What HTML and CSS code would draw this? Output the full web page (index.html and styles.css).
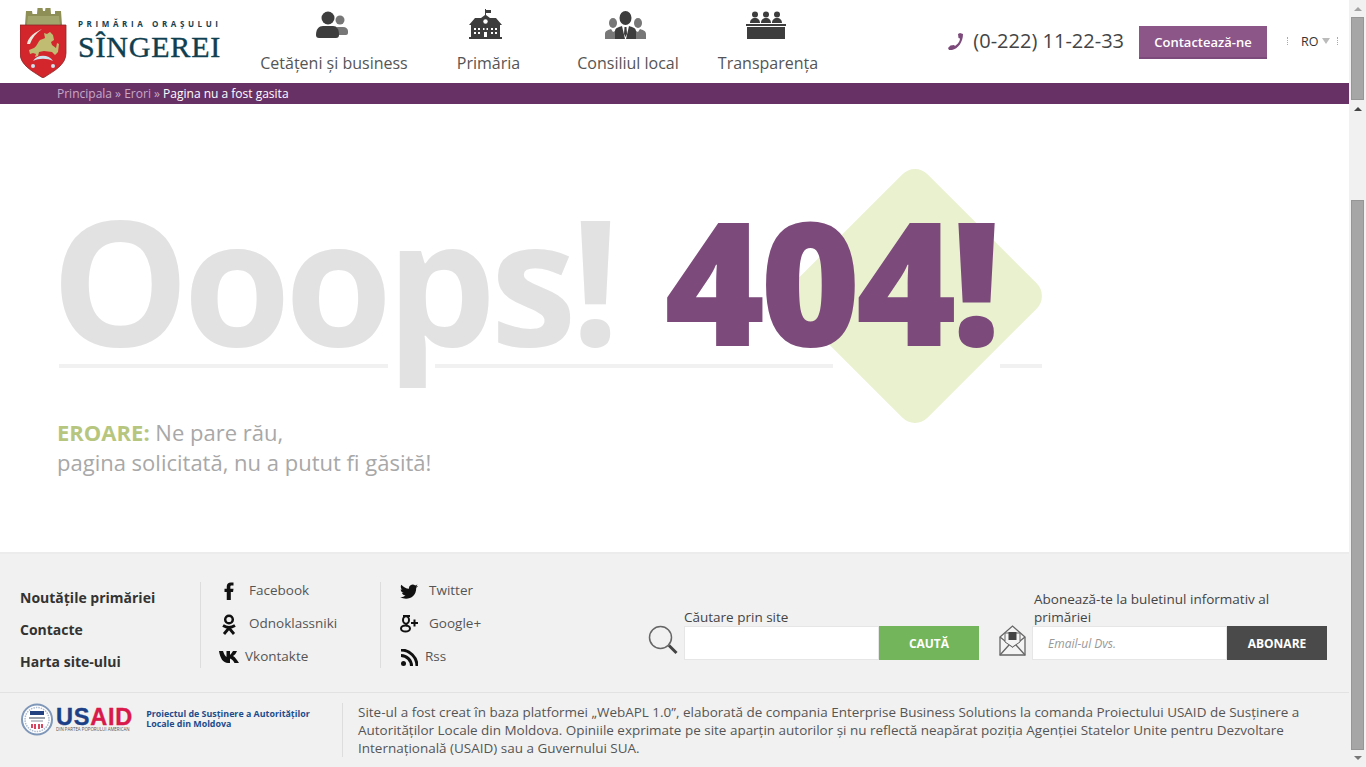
FILE: index.html
```html
<!DOCTYPE html>
<html lang="ro">
<head>
  <meta charset="UTF-8">
  <title>Primăria orașului Sîngerei</title>
  <link rel="stylesheet" href="styles.css">
</head>
<body>
<div class="page">

  <header class="top">
    <a class="logo" href="#">
      <svg class="crest" width="47" height="70" viewBox="0 0 47 70">
        <path d="M5 17L6 3h6l.5 3H17l.5-6h5l.5 3h2l.5-3h5l.5 6h4L35 3h6l1 14z" fill="#8d8f56"/>
        <path d="M8 8h31l1 9H7z" fill="#a3a66c"/>
        <path d="M0 17h46v28c0 12-12 18-23 25C12 63 0 57 0 45z" fill="#d2262c" stroke="#8c2a2a" stroke-width=".8"/>
        <path d="M9 42l5-2c3-2 4-6 6-8 2-1 4-1 5-2l-1-5 3 1 3-2 3 3 1 5-3 2 1 3 4 3 1-5 2 1-1 8-3 3-3-3-8-1-5 1-1 4-3 1 1-3-3-1-3 1z" fill="#c0bd72"/>
        <path d="M7 36c1-7 8-12 15-15-6 4-10 9-12 15z" fill="#e9e9e0"/>
        <path d="M13 53c4-7 16-7 20 0-6-3-14-3-20 0z" fill="#cfe3ef"/>
        <circle cx="13" cy="58" r="2" fill="#cfe3ef"/>
        <circle cx="33" cy="58" r="2" fill="#cfe3ef"/>
      </svg>
      <span class="logo-text">
        <span class="logo-small">PRIMĂRIA ORAȘULUI</span>
        <span class="logo-big">SÎNGEREI</span>
      </span>
    </a>

    <nav class="menu">
      <a href="#" class="menu-item item-1">
        <svg width="32" height="28" viewBox="0 0 32 28">
          <circle cx="24" cy="9" r="4.500" fill="#777"/>
          <path d="M21 16h6c3 0 5 2 5 4v2c0 1-1 2-2 2h-8z" fill="#777"/>
          <circle cx="12" cy="7" r="6.500" fill="#3d3d3d"/>
          <path d="M0 24c0-6 3-9 7-9h10c4 0 6 3 6 9 0 2-1 3-3 3H3c-2 0-3-1-3-3z" fill="#3d3d3d"/>
        </svg>
        Cetățeni și business
      </a>
      <a href="#" class="menu-item item-2">
        <svg width="33" height="30" viewBox="0 0 33 30">
          <path d="M16 0h1v1h5v3h-5v2l4 3h6l6 7H0l6-7h6l4-3z" fill="#3d3d3d"/>
          <path d="M2 16h29v12H2z" fill="#3d3d3d"/>
          <path d="M0 28h33v2H0z" fill="#3d3d3d"/>
          <path d="M5 19h2v2H5zM9 19h2v2H9zM22 19h2v2h-2zM26 19h2v2h-2zM5 23h2v2H5zM9 23h2v2H9zM22 23h2v2h-2zM26 23h2v2h-2zM15 23h3v5h-3zM14 19h1.500v2H14zM17.500 19H19v2h-1.500z" fill="#fff"/>
          <circle cx="16.500" cy="12.500" r="2.200" fill="#fff"/>
        </svg>
        Primăria
      </a>
      <a href="#" class="menu-item item-3">
        <svg width="41" height="28" viewBox="0 0 41 28">
          <ellipse cx="8" cy="12" rx="4" ry="5" fill="#777"/>
          <ellipse cx="33" cy="12" rx="4" ry="5" fill="#777"/>
          <path d="M0 28v-5c0-3 3-4 6-5l2 3 2-1v8zM41 28v-5c0-3-3-4-6-5l-2 3-2-1v8z" fill="#777"/>
          <ellipse cx="20.500" cy="7" rx="6" ry="7" fill="#3d3d3d"/>
          <path d="M10 28v-8c0-3 4-4 7-5l3 13h1l3-13c3 1 7 2 7 5v8z" fill="#3d3d3d"/>
          <path d="M19.500 16h2l.5 7-1.500 3-1.500-3z" fill="#3d3d3d"/>
        </svg>
        Consiliul local
      </a>
      <a href="#" class="menu-item item-4">
        <svg width="40" height="28" viewBox="0 0 40 28">
          <circle cx="9" cy="3.500" r="3" fill="#3d3d3d"/>
          <circle cx="20" cy="3.500" r="3" fill="#3d3d3d"/>
          <circle cx="31" cy="3.500" r="3" fill="#3d3d3d"/>
          <path d="M4 12c0-3 2-5 5-5s5 2 5 5zM15 12c0-3 2-5 5-5s5 2 5 5zM26 12c0-3 2-5 5-5s5 2 5 5z" fill="#3d3d3d"/>
          <path d="M0 13h40v2H0z" fill="#3d3d3d"/>
          <path d="M1 16h38v12H1z" fill="#3d3d3d"/>
        </svg>
        Transparența
      </a>
    </nav>

    <div class="contact">
      <svg class="phone" width="17" height="17" viewBox="0 0 17 17">
        <path d="M16 1l-3-1-2 1 .5 4 1.500.5c0 3-2.500 6-5 7.500L7 12l-3.500.5L1 15l1 2h3C11 16 16 9 16 1z" fill="#7d4b7b"/>
      </svg>
      <span class="phone-nr">(0-222) 11-22-33</span>
      <a href="#" class="btn-contact">Contactează-ne</a>
      <div class="lang"><i class="lang-dots"></i><span class="lang-name">RO</span><i class="lang-arrow"></i><i class="lang-dots"></i></div>
    </div>
  </header>

  <div class="crumbs">
    <a href="#">Principala</a> » <a href="#">Erori</a> » <b>Pagina nu a fost gasita</b>
  </div>

  <main class="error">
    <div class="diamond"></div>
    <h1 class="oops">Ooops! <strong>404!</strong></h1>
    <div class="rule">
      <span class="rule-1"></span>
      <span class="rule-2"></span>
      <span class="rule-3"></span>
    </div>
    <p class="msg"><b>EROARE:</b> Ne pare rău,<br>pagina solicitată, nu a putut fi găsită!</p>
  </main>

  <footer class="foot">
    <div class="foot-top">
      <ul class="foot-links">
        <li><a href="#">Noutățile primăriei</a></li>
        <li><a href="#">Contacte</a></li>
        <li><a href="#">Harta site-ului</a></li>
      </ul>
      <ul class="social">
        <li>
          <span class="soc-ico"><svg width="20" height="18" viewBox="0 0 20 20"><path d="M7.500 20V11H5V7.500h2.500V5c0-3 2-4.500 4.500-4.500h3V4h-2c-1 0-1.500.5-1.500 1.500v2H15l-.5 3.500H12v9z" fill="#111"/></svg></span>
          <a href="#">Facebook</a>
        </li>
        <li>
          <span class="soc-ico"><svg width="16" height="21" viewBox="0 0 16 21"><circle cx="8" cy="5.500" r="3.800" fill="none" stroke="#111" stroke-width="2.500"/><path d="M2 11.500c4 2.500 8 2.500 12 0M8 14l-5 6M8 14l5 6" fill="none" stroke="#111" stroke-width="2.800"/></svg></span>
          <a href="#">Odnoklassniki</a>
        </li>
        <li class="tight">
          <span class="soc-ico"><svg width="20" height="12" viewBox="0 0 20 12"><path d="M0 0h4c1 3 2 5 3.500 6V0H11v4c1-1 2-2.500 3-4h4c-1 2-2 4-4 5 2 1 4 4 6 7h-4.500c-1-2-2.500-4-4.500-4.500V12H9C4 12 1 7 0 0z" fill="#111"/></svg></span>
          <a href="#">Vkontakte</a>
        </li>
      </ul>
      <ul class="social social-2">
        <li>
          <span class="soc-ico"><svg width="18" height="15" viewBox="0 0 18 15"><path d="M18 2c-.7.300-1.400.500-2.100.600.800-.500 1.300-1.200 1.600-2-.7.400-1.500.700-2.300.900A3.700 3.700 0 0 0 9 4.800C6 4.700 3.300 3.200 1.300.800.300 2.500.800 4.600 2.400 5.700c-.6 0-1.200-.2-1.700-.5 0 1.800 1.300 3.300 3 3.700-.5.100-1.100.2-1.700.1.500 1.500 1.900 2.500 3.500 2.600A7.500 7.500 0 0 1 0 13.100C7.500 17.500 16.500 13 16.200 3.800c.7-.5 1.300-1.100 1.800-1.800z" fill="#111"/></svg></span>
          <a href="#">Twitter</a>
        </li>
        <li>
          <span class="soc-ico"><svg width="18" height="18" viewBox="0 0 18 18"><ellipse cx="6" cy="5" rx="3" ry="3.800" fill="none" stroke="#111" stroke-width="2"/><ellipse cx="5.500" cy="13.500" rx="4.500" ry="3" fill="none" stroke="#111" stroke-width="2"/><path d="M6 9l1 2M3 1h7M11 8h7M14.500 4.500v7" stroke="#111" stroke-width="2" fill="none"/></svg></span>
          <a href="#">Google+</a>
        </li>
        <li class="tight">
          <span class="soc-ico"><svg width="17" height="17" viewBox="0 0 17 17"><circle cx="2.500" cy="14.500" r="2.500" fill="#111"/><path d="M0 6.500A10.500 10.500 0 0 1 10.500 17M0 1a16 16 0 0 1 16 16" fill="none" stroke="#111" stroke-width="3"/></svg></span>
          <a href="#">Rss</a>
        </li>
      </ul>

      <div class="form-search">
        <svg class="form-icon" width="30" height="30" viewBox="0 0 30 30"><circle cx="12.500" cy="12.500" r="11" fill="none" stroke="#666" stroke-width="1.500"/><path d="M21 20.500l7.500 7.500" stroke="#444" stroke-width="3"/></svg>
        <div class="form-body">
          <label class="form-label">Căutare prin site</label>
          <div class="form-row">
            <input class="form-input" type="text">
            <button class="form-btn btn-green">CAUTĂ</button>
          </div>
        </div>
      </div>

      <div class="form-news">
        <svg class="form-icon" width="27" height="31" viewBox="0 0 27 31"><path d="M1 12L13.500 1 26 12v18H1z" fill="#f4f4f4" stroke="#666" stroke-width="1.300"/><path d="M1 12l12.500 10L26 12M1 30l9-10M26 30l-9-10" fill="none" stroke="#666" stroke-width="1.300"/><path d="M6 8h15v9l-7.500 5L6 17z" fill="#f4f4f4" stroke="#666"/><path d="M9.500 7h8v8h-8z" fill="#444"/></svg>
        <div class="form-body">
          <label class="form-label label-news">Abonează-te la buletinul informativ al primăriei</label>
          <div class="form-row">
            <input class="form-input input-mail" type="text" placeholder="Email-ul Dvs.">
            <button class="form-btn btn-dark">ABONARE</button>
          </div>
        </div>
      </div>
    </div>

    <div class="foot-bottom">
      <div class="usaid">
        <svg class="usaid-seal" width="32" height="33" viewBox="0 0 32 33">
          <circle cx="16" cy="16.500" r="15" fill="#fff" stroke="#7f97b8" stroke-width="2"/>
          <circle cx="16" cy="16.500" r="12" fill="none" stroke="#aebcd0" stroke-width="1.500" stroke-dasharray="1.500 1"/>
          <path d="M9 8h14v4H9z" fill="#23407f"/>
          <path d="M8 14h16v2H8z" fill="#9aa0aa"/>
          <path d="M10 17h12v2H10z" fill="#c3c7cd"/>
          <path d="M10 21h2v4h-2zM13 21h2v5h-2zM17 21h2v5h-2zM20 21h2v4h-2z" fill="#d9455f"/>
        </svg>
        <div class="usaid-mark">
          <span class="usaid-name">US<em>AID</em></span>
          <span class="usaid-sub">DIN PARTEA POPORULUI AMERICAN</span>
        </div>
        <div class="usaid-project">Proiectul de Susținere a Autorităților Locale din Moldova</div>
      </div>
      <p class="credits">Site-ul a fost creat în baza platformei „WebAPL 1.0”, elaborată de compania Enterprise Business Solutions la comanda Proiectului USAID de Susținere a Autorităților Locale din Moldova. Opiniile exprimate pe site aparțin autorilor și nu reflectă neapărat poziția Agenției Statelor Unite pentru Dezvoltare Internaţională (USAID) sau a Guvernului SUA.</p>
    </div>
  </footer>
</div>

<div class="scrollbar">
  <span class="sb-up"></span>
  <span class="sb-thumb"></span>
  <span class="sb-mid"></span>
  <span class="sb-thumb sb-long"></span>
  <span class="sb-down"></span>
</div>
</body>
</html>
```

FILE: styles.css
```css
* { margin: 0; padding: 0; box-sizing: border-box; }
html, body { height: 767px; overflow: hidden; }
body { display: flex; background: #fff; color: #444; font-family: 'Open Sans', sans-serif; }
a { color: inherit; text-decoration: none; }
ul { list-style: none; }

.page { width: 1349px; height: 767px; display: flex; flex-direction: column; }

/* header */
.top { height: 83px; display: flex; flex: none; }
.logo { display: flex; width: 260px; padding: 8px 0 0 20px; }
.crest { flex: none; }
.logo-text { display: flex; flex-direction: column; margin-left: 11px; padding-top: 11px; }
.logo-small { font-size: 8px; font-weight: 700; letter-spacing: 3.600px; color: #173f4f; white-space: nowrap; line-height: 10px; }
.logo-big { font-family: 'Liberation Serif', serif; font-size: 30px; line-height: 36px; letter-spacing: .8px; color: #0f3f50; -webkit-text-stroke: .4px #0f3f50; }

.menu { display: flex; }
.menu-item { display: flex; flex-direction: column; align-items: center; justify-content: flex-end; height: 74px; font-size: 16px; line-height: 22px; color: #555; white-space: nowrap; }
.menu-item svg { margin: 0 4px 13px 0; }
.item-1 { width: 148px; }
.item-2 { width: 160px; padding-left: 1px; }
.item-2 svg { margin-right: 6px; }
.item-3 { width: 120px; }
.item-3 svg { margin-right: 5px; }
.item-4 { width: 160px; }

.contact { display: flex; align-items: flex-start; margin-left: auto; padding-top: 26px; }
.phone { margin: 7px 9px 0 0; }
.phone-nr { font-size: 20px; font-weight: 500; line-height: 30px; color: #444; }
.btn-contact { width: 128px; height: 33px; margin-left: 15px; background: #8c5689; border-bottom: 2px solid #7d4b7b; color: #fff; font-size: 13px; font-weight: 600; line-height: 32px; text-align: center; }
.lang { display: flex; align-items: center; width: 52px; height: 30px; margin: 0 10px 0 20px; font-size: 12.500px; color: #333; }
.lang-dots { width: 1px; height: 8px; border-left: 1px dotted #aaa; }
.lang-name { margin-left: 13px; }
.lang-arrow { margin: 0 7px 0 4px; border: 4px solid transparent; border-top: 6px solid #bbb; border-bottom: 0; }

.crumbs { height: 21px; flex: none; padding-left: 57px; background: #683166; color: #c9a9c7; font-size: 12px; line-height: 21px; }
.crumbs b { font-weight: 400; color: #fff; }

/* 404 */
.error { position: relative; flex: 1; padding: 70px 0 0 51px; }
.diamond { position: absolute; left: 820px; top: 97px; width: 190px; height: 190px; background: #e9f1cf; border-radius: 18px; transform: rotate(45deg); }
.oops { position: relative; font-size: 174px; line-height: 210px; font-weight: 700; color: #e2e2e2; white-space: nowrap; letter-spacing: -6.200px; }
.oops strong { margin-left: 11px; font-size: 172px; font-weight: 800; color: #7d4b7b; letter-spacing: -5px; }
.rule { position: absolute; left: 59px; top: 260px; display: flex; }
.rule span { height: 4px; background: #f1f1f1; }
.rule-1 { width: 329px; }
.rule-2 { width: 398px; margin-left: 47px; }
.rule-3 { width: 42px; margin-left: 167px; }
.msg { position: absolute; left: 57px; top: 313px; font-size: 22px; line-height: 30px; color: #a8a8a8; }
.msg b { color: #b7c67e; }

/* footer */
.foot { flex: none; height: 215px; background: #f1f1f1; border-top: 2px solid #ececec; }
.foot-top { display: flex; height: 139px; border-bottom: 1px solid #e2e2e2; }
.foot-links { width: 201px; height: 86px; margin-top: 28px; padding: 4px 0 0 20px; border-right: 1px solid #ddd; font-size: 14px; font-weight: 700; color: #333; }
.foot-links li { height: 32px; line-height: 24px; }
.social { width: 180px; height: 86px; margin-top: 28px; padding-left: 17px; border-right: 1px solid #ddd; font-size: 13.500px; color: #555; }
.social-2 { border-right: 0; width: 268px; }
.social li { display: flex; height: 33px; line-height: 16px; }
.soc-ico { flex: none; display: flex; align-items: center; justify-content: center; width: 22px; height: 18px; }
.social a { margin-left: 9px; }
.social .tight a { margin-left: 5px; }

.form-search { display: flex; align-items: flex-end; width: 350px; padding-bottom: 32px; }
.form-news { display: flex; align-items: flex-end; flex: 1; padding-bottom: 32px; }
.form-icon { flex: none; margin-bottom: 4px; }
.form-search .form-icon { margin: 0 6px 5px -1px; }
.form-news .form-icon { margin-right: 6px; }
.form-body { width: 295px; }
.form-label { display: block; font-size: 13.500px; line-height: 18px; color: #444; }
.label-news { width: 260px; padding-left: 2px; }
.form-row { display: flex; height: 34px; }
.form-input { flex: 1; min-width: 0; border: 1px solid #e6e6e6; background: #fff; font: 12px 'Open Sans', sans-serif; }
.input-mail { padding-left: 15px; }
.input-mail::placeholder { color: #999; font-style: italic; }
.form-btn { width: 100px; border: 0; color: #fff; font: 700 12px 'Open Sans', sans-serif; }
.btn-green { background: #73b55b; }
.btn-dark { background: #4a4a4a; }

.foot-bottom { display: flex; padding-top: 10px; }
.usaid { display: flex; align-items: flex-start; width: 343px; height: 54px; padding-left: 21px; border-right: 1px solid #ddd; }
.usaid-mark { display: flex; flex-direction: column; margin: 3px 0 0 3px; }
.usaid-name { font-family: 'Liberation Sans', sans-serif; font-size: 23.500px; font-weight: 700; line-height: 22px; color: #1c3f85; letter-spacing: .8px; -webkit-text-stroke: .4px currentColor; }
.usaid-name em { font-style: normal; color: #d8194a; }
.usaid-sub { margin-top: -2px; font-size: 4.400px; line-height: 7px; white-space: nowrap; color: #555; }
.usaid-project { width: 175px; margin: 6px 0 0 13px; font-size: 8.900px; font-weight: 700; line-height: 10px; color: #1c4c8c; }
.credits { width: 960px; padding-left: 15px; font-size: 13.470px; line-height: 18px; color: #555; }

/* drawn scrollbar */
.scrollbar { width: 17px; height: 767px; display: flex; flex-direction: column; align-items: center; background: #f1f1f1; }
.sb-up { margin-top: 7px; border: 4px solid transparent; border-top: 0; border-bottom: 4px solid #a3a3a3; }
.sb-thumb { flex: none; width: 13px; height: 83px; margin-top: 6px; background: #a6a6a6; border: 1px solid #969696; }
.sb-mid { margin-top: 7px; border: 4px solid transparent; border-top: 0; border-bottom: 4px solid #444; }
.sb-long { height: 550px; margin-top: 89px; }
.sb-down { margin-top: 6px; border: 4px solid transparent; border-bottom: 0; border-top: 4px solid #777; }
```
